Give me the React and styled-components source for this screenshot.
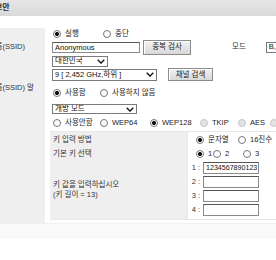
import React from 'react'
import styled, { createGlobalStyle } from 'styled-components'

const GlobalStyle = createGlobalStyle`
  html, body {
    margin: 0;
    padding: 0;
    background: #fff;
    overflow: hidden;
  }
  body {
    font-family: "Liberation Sans", "Noto Sans CJK KR", sans-serif;
    font-size: 7.5px;
    line-height: 10px;
    color: #222;
  }
`

// the screenshot is a crop of a wider page, the left edge is cut off
const Page = styled.div`
  margin-left: -44px;
  width: 340px;
`

const TitleBar = styled.div`
  height: 16px;
  display: flex;
  align-items: center;
  padding-left: 22px;
  background: linear-gradient(#e6e6e6, #d9d9d9);
  font-size: 8px;
  font-weight: bold;
  color: #333;
`

const Form = styled.div`
  margin-top: 12px;
  display: grid;
  grid-template-columns: 89px 1fr;
`

const Label = styled.div`
  display: flex;
  align-items: center;
  padding: 0 4px 0 3px;
  background: #efefef;
  color: #333;
  overflow: hidden;
  white-space: nowrap;
`

const Field = styled.div`
  height: ${p => p.$h}px;
  display: flex;
  align-items: ${p => p.$stretch ? 'stretch' : 'center'};
  gap: ${p => p.$gap || 0}px;
  padding-left: ${p => p.$pad ?? 8}px;
  background: #fff;
  white-space: nowrap;
`

const Option = styled.label`
  display: inline-flex;
  align-items: center;
  gap: 4px;
  flex-shrink: 0;
  min-width: ${p => (p.$w ? `${p.$w}px` : 'auto')};
`

const Radio = styled.input.attrs({ type: 'radio' })`
  appearance: none;
  box-sizing: border-box;
  margin: 0;
  width: 8px;
  height: 8px;
  border: 1px solid #767676;
  border-radius: 50%;
  background: #fff;
  flex-shrink: 0;

  &:checked {
    background: radial-gradient(circle, #111 0 1.7px, #fff 2.3px);
  }
  &:disabled {
    border-color: #c6c6c6;
    background: #e3e3e3;
  }
`

const TextInput = styled.input`
  box-sizing: border-box;
  width: ${p => p.$w}px;
  height: ${p => p.$h || 11}px;
  margin: 0;
  padding: 0 1px 0 2px;
  font: inherit;
  font-size: ${p => p.$fs || 7.5}px;
  color: #111;
  background: #fff;
  border: 1px solid #8a8a8a;
  border-top-color: #555;
  border-radius: 0;
  outline: none;
`

const SelectBox = styled.div`
  box-sizing: border-box;
  width: ${p => p.$w}px;
  height: ${p => p.$h || 11}px;
  flex-shrink: 0;
  display: flex;
  align-items: center;
  justify-content: space-between;
  padding: 0 2px;
  background: #fff;
  border: 1px solid #7a7a7a;
  color: #111;
  overflow: hidden;
`

const Button = styled.button`
  box-sizing: border-box;
  width: ${p => p.$w}px;
  height: ${p => p.$h}px;
  margin: 0;
  padding: 0;
  font: inherit;
  color: #222;
  border: 1px solid #8c8c8c;
  border-radius: 0;
  background: linear-gradient(#f2f2f2, #d8d8d8);
  box-shadow: inset 1px 1px #fff;
`

const Mode = styled.span`
  margin: 0 17px 0 38px;
  color: #333;
`

const Panel = styled.div`
  flex: 1;
  margin-bottom: 3px;
  display: grid;
  grid-template-columns: 137px 1fr;
  grid-template-rows: 15px 13px 1fr;
  gap: 0 1px;
  padding: 1px 0;
  background: #e8e8e8;
  border-left: 1px solid #fff;
`

const PanelLabel = styled.div`
  display: flex;
  flex-direction: column;
  justify-content: center;
  padding-left: 3px;
  background: #efefef;
  color: #333;
`

const PanelValue = styled.div`
  display: flex;
  align-items: center;
  padding-left: 8px;
  background: #fff;
  overflow: hidden;
`

const KeyList = styled.div`
  display: flex;
  flex-direction: column;
  gap: 2px;
  padding: 2px 0 0 3px;
  background: #fff;
`

const KeyRow = styled.div`
  display: flex;
  align-items: center;
  gap: 3px;
`

const KeyNo = styled.span`
  width: 9px;
  text-align: right;
  color: #333;
`

const Footer = styled.div`
  height: 15px;
  background: #fafafa;
  border-top: 1px solid #f0f0f0;
`

const Chevron = () => (
  <svg width="8" height="5" viewBox="0 0 8 5">
    <path d="M0.7 0.8 L4 4 L7.3 0.8" fill="none" stroke="#111" strokeWidth="1.3" />
  </svg>
)

const Select = ({ w, h, children }) => (
  <SelectBox $w={w} $h={h}>
    <span>{children}</span>
    <Chevron />
  </SelectBox>
)

const Choice = ({ name, w, checked, disabled, children }) => (
  <Option $w={w}>
    <Radio name={name} defaultChecked={checked} disabled={disabled} />
    {children}
  </Option>
)

const keys = ['1234567890123', '', '', '']

export default function App() {
  return (
    <Page>
      <GlobalStyle />
      <TitleBar>무선 보안</TitleBar>
      <Form>
        <Label />
        <Field $h={11}>
          <Choice name="run" w={50} checked>실행</Choice>
          <Choice name="run">중단</Choice>
        </Field>

        <Label>네트워크 이름(SSID)</Label>
        <Field $h={16} $pad={7} $gap={3}>
          <TextInput $w={88} defaultValue="Anonymous" readOnly />
          <Button $w={48} $h={15}>중복 검사</Button>
          <Mode>모드</Mode>
          <Select w={70}>B,G,N 혼합</Select>
        </Field>

        <Label />
        <Field $h={12} $pad={7}>
          <Select w={56}>대한민국</Select>
        </Field>

        <Label />
        <Field $h={15} $pad={7} $gap={11}>
          <Select w={105} h={12}>9 [ 2,452 GHz,하위 ]</Select>
          <Button $w={45} $h={13}>채널 검색</Button>
        </Field>

        <Label>
          <span>
            네트워크 이름(SSID) 알
            <br />
            림
          </span>
        </Label>
        <Field $h={22}>
          <Choice name="bcast" w={47} checked>사용함</Choice>
          <Choice name="bcast">사용하지 않음</Choice>
        </Field>

        <Label />
        <Field $h={10} $pad={7}>
          <Select w={85} h={10}>개방 모드</Select>
        </Field>

        <Label />
        <Field $h={17}>
          <Choice name="enc" w={47}>사용안함</Choice>
          <Choice name="enc" w={50}>WEP64</Choice>
          <Choice name="enc" w={50} checked>WEP128</Choice>
          <Choice name="enc" w={38} disabled>TKIP</Choice>
          <Choice name="enc" w={32} disabled>AES</Choice>
          <Choice name="enc" disabled>TKIP+AES</Choice>
        </Field>

        <Label />
        <Field $h={92} $pad={4} $stretch>
          <Panel>
            <PanelLabel>키 입력 방법</PanelLabel>
            <PanelValue>
              <Choice name="fmt" w={42} checked>문자열</Choice>
              <Choice name="fmt">16진수</Choice>
            </PanelValue>

            <PanelLabel>기본 키 선택</PanelLabel>
            <PanelValue>
              <Choice name="idx" w={17} checked>1</Choice>
              <Choice name="idx" w={30}>2</Choice>
              <Choice name="idx" w={36}>3</Choice>
              <Choice name="idx">4</Choice>
            </PanelValue>

            <PanelLabel>
              <span>키 값을 입력하십시오</span>
              <span>(키 길이 = 13)</span>
            </PanelLabel>
            <KeyList>
              {keys.map((k, i) => (
                <KeyRow key={i}>
                  <KeyNo>{i + 1} :</KeyNo>
                  <TextInput $w={56} $h={12} $fs={7.1} defaultValue={k} readOnly />
                </KeyRow>
              ))}
            </KeyList>
          </Panel>
        </Field>
      </Form>
      <Footer />
    </Page>
  )
}
